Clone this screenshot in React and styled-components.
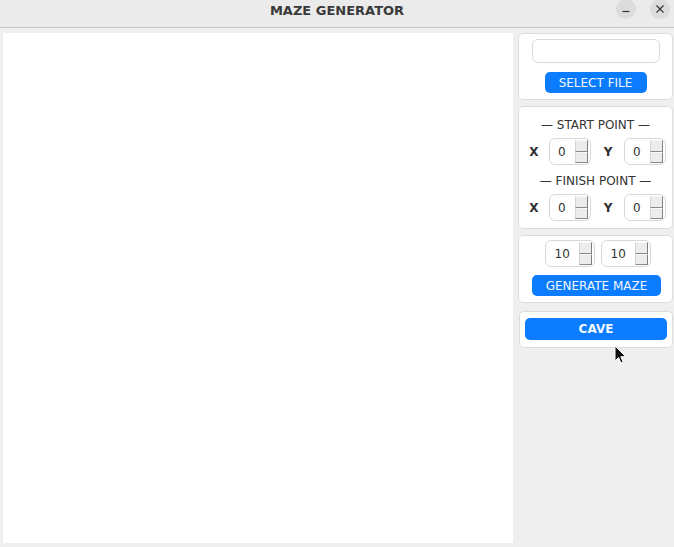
import React from 'react';
import styled, { createGlobalStyle } from 'styled-components';

const GlobalStyle = createGlobalStyle`
  html, body {
    margin: 0;
    padding: 0;
    background: #efefef;
    font-family: "DejaVu Sans", "Liberation Sans", sans-serif;
  }
`;

const Window = styled.div`
  position: relative;
  width: 674px;
  height: 547px;
  background: #efefef;
  overflow: hidden;
`;

const TitleBar = styled.div`
  position: relative;
  height: 27px;
  background: #ebebeb;
  border-bottom: 1px solid #c4c4c4;
  display: flex;
  align-items: center;
  justify-content: center;
`;

const Title = styled.div`
  font-family: "DejaVu Sans", sans-serif;
  font-weight: bold;
  font-size: 13px;
  color: #3a3a3a;
  margin-top: -6px;
`;

const WinButtons = styled.div`
  position: absolute;
  right: 4px;
  top: -1px;
  display: flex;
  gap: 14px;
`;

const WinButton = styled.div`
  width: 20px;
  height: 20px;
  border-radius: 50%;
  background: #dcdcdc;
  display: flex;
  align-items: center;
  justify-content: center;
`;

const Body = styled.div`
  display: flex;
  gap: 5px;
  padding: 5px 1px 4px 3px;
`;

const Canvas = styled.div`
  width: 510px;
  height: 510px;
  background: #ffffff;
  border-radius: 2px;
  flex-shrink: 0;
`;

const Side = styled.div`
  width: 155px;
  display: flex;
  flex-direction: column;
`;

const Panel = styled.div`
  background: #ffffff;
  border: 1px solid #dcdcdc;
  border-radius: 5px;
  display: flex;
  flex-direction: column;
  align-items: center;
  padding: ${p => p.$pad || '6px 0'};
  gap: ${p => p.$gap || 8}px;
  margin-left: ${p => p.$shift || 0}px;
  margin-top: ${p => p.$mt || 0}px;
`;

const FileInput = styled.div`
  width: 126px;
  height: 22px;
  border: 1px solid #d8d8d8;
  border-radius: 6px;
  background: #fff;
`;

const BlueButton = styled.button`
  width: ${p => p.$w}px;
  height: ${p => p.$h || 21}px;
  border: none;
  border-radius: 5px;
  background: #0b7cff;
  color: #f4f8ff;
  font-family: "DejaVu Sans", sans-serif;
  font-size: 12px;
  font-weight: ${p => (p.$bold ? 'bold' : 'normal')};
  padding: 0;
  margin-left: ${p => p.$ml || 0}px;
  display: flex;
  align-items: center;
  justify-content: center;
`;

const SectionTitle = styled.div`
  font-size: 12px;
  color: #333;
  height: 18px;
  line-height: 18px;
  margin-top: ${p => p.$mt || 0}px;
`;

const CoordRow = styled.div`
  align-self: stretch;
  display: flex;
  align-items: center;
  padding-left: 10px;
`;

const AxisLabel = styled.div`
  width: 10px;
  font-weight: bold;
  font-size: 12px;
  color: #2e2e2e;
  margin-right: ${p => p.$mr}px;
  margin-left: ${p => p.$ml || 0}px;
  text-align: center;
`;

const SpinRow = styled.div`
  display: flex;
  gap: 6px;
  margin-left: 4px;
`;

const Spin = styled.div`
  width: ${p => p.$w}px;
  box-sizing: border-box;
  height: 27px;
  border: 1px solid #d8d8d8;
  border-radius: 6px;
  background: #fff;
  display: flex;
  align-items: center;
  justify-content: space-between;
  padding: 0 2px 0 0;
`;

const SpinValue = styled.div`
  font-size: 12px;
  color: #333;
  padding-left: ${p => p.$pl}px;
`;

const Stepper = styled.div`
  display: flex;
  flex-direction: column;
  width: 13px;
  height: 23px;
`;

const Step = styled.div`
  flex: 1;
  background: #ececec;
  border-top: 1px solid #f8f8f8;
  border-left: 1px solid #d4d4d4;
  border-right: 1px solid #7e7e7e;
  border-bottom: 1px solid #8a8a8a;
`;

const Cursor = styled.svg`
  position: absolute;
  left: 614px;
  top: 345px;
`;

const SpinBox = ({ value, w, pl }) => (
  <Spin $w={w}>
    <SpinValue $pl={pl}>{value}</SpinValue>
    <Stepper>
      <Step />
      <Step />
    </Stepper>
  </Spin>
);

const CoordLine = () => (
  <CoordRow>
    <AxisLabel $mr={10}>X</AxisLabel>
    <SpinBox value="0" w={42} pl={8} />
    <AxisLabel $ml={12} $mr={11}>Y</AxisLabel>
    <SpinBox value="0" w={42} pl={8} />
  </CoordRow>
);

const App = () => (
  <>
    <GlobalStyle />
    <Window>
      <TitleBar>
        <Title>MAZE GENERATOR</Title>
        <WinButtons>
          <WinButton>
            <svg width="10" height="10" viewBox="0 0 10 10">
              <path d="M1.5 7.5h7" stroke="#333" strokeWidth="1.2" />
            </svg>
          </WinButton>
          <WinButton>
            <svg width="10" height="10" viewBox="0 0 10 10">
              <path d="M1.5 1.5l7 7M8.5 1.5l-7 7" stroke="#333" strokeWidth="1.2" />
            </svg>
          </WinButton>
        </WinButtons>
      </TitleBar>
      <Body>
        <Canvas />
        <Side>
          <Panel $pad="5px 0 6px" $gap={9}>
            <FileInput />
            <BlueButton $w={102}>SELECT FILE</BlueButton>
          </Panel>
          <Panel $pad="9px 0 7px" $gap={4} $mt={6}>
            <SectionTitle>— START POINT —</SectionTitle>
            <CoordLine />
            <SectionTitle $mt={3}>— FINISH POINT —</SectionTitle>
            <CoordLine />
          </Panel>
          <Panel $pad="4px 0 6px" $gap={8} $mt={6}>
            <SpinRow>
              <SpinBox value="10" w={50} pl={9} />
              <SpinBox value="10" w={50} pl={9} />
            </SpinRow>
            <BlueButton $w={129} $ml={2}>GENERATE MAZE</BlueButton>
          </Panel>
          <Panel $pad="6px 0 7px" $gap={0} $shift={1} $mt={8}>
            <BlueButton $w={142} $h={22} $bold>CAVE</BlueButton>
          </Panel>
        </Side>
      </Body>
      <Cursor width="13" height="20" viewBox="0 0 13 20">
        <path d="M1 1v15l3.5-3.5 2.5 5.5 2.2-1-2.4-5.3h5z" fill="#111" stroke="#fff" strokeWidth="1" />
      </Cursor>
    </Window>
  </>
);

export default App;
